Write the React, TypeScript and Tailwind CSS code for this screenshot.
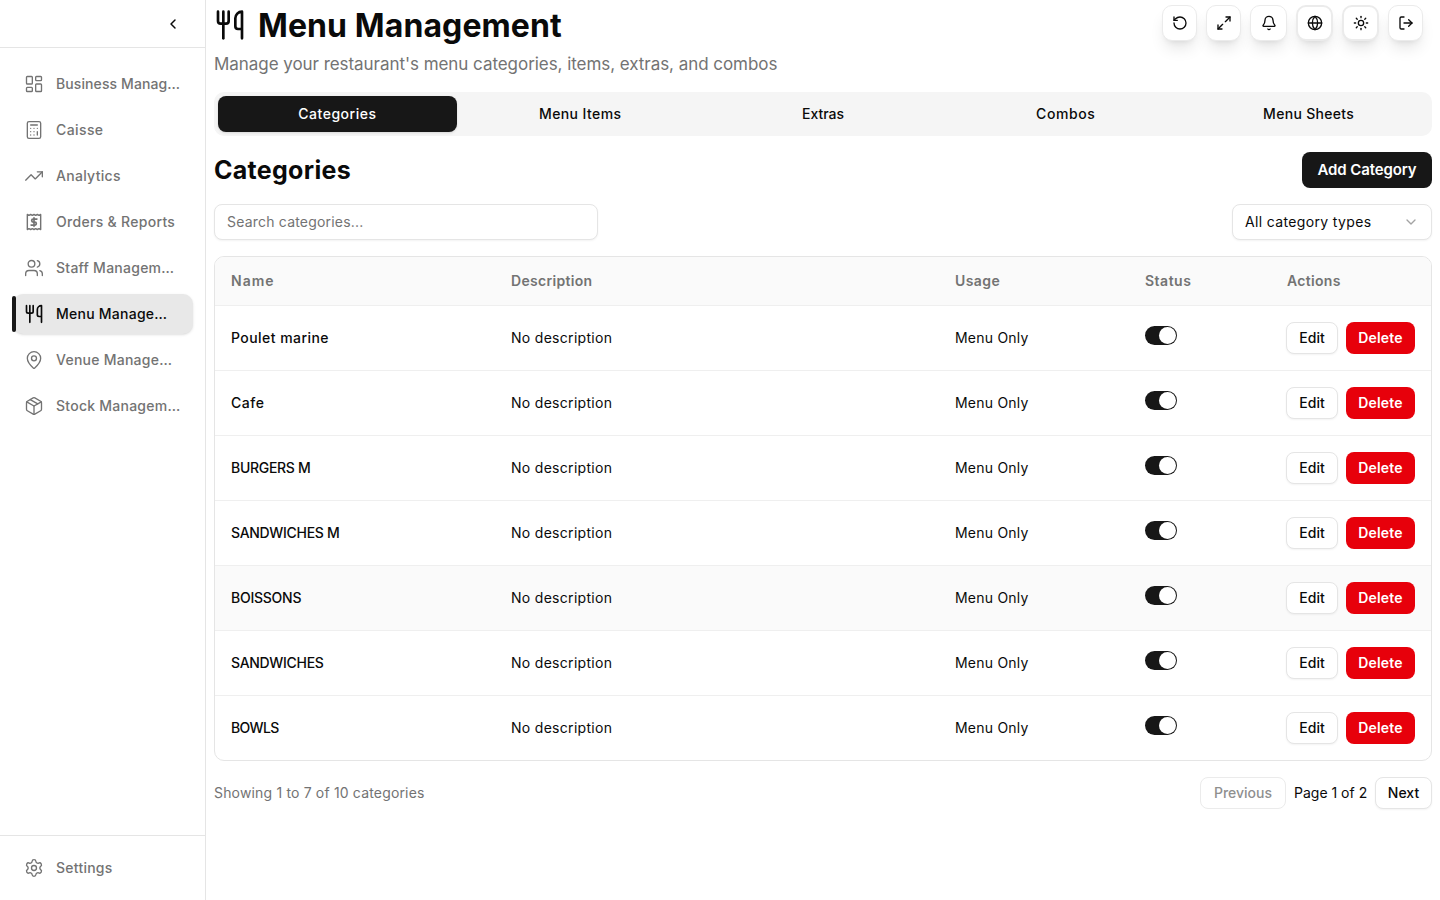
import React from "react";
import { ChevronLeft, ChevronDown, LayoutDashboard, Calculator, TrendingUp, Users, Utensils, MapPin, Package, Settings, RotateCcw, Maximize2, Bell, Globe, Sun, LogOut } from "lucide-react";

const OrdersIcon = ({ className }: { className?: string }) => (
  <svg viewBox="0 0 24 24" width="20" height="20" fill="none" stroke="currentColor" strokeWidth="1.7" strokeLinecap="round" strokeLinejoin="round" className={className}>
    <path d="M4 3l2 1 2-1 2 1 2-1 2 1 2-1 2 1 2-1v18l-2-1-2 1-2-1-2 1-2-1-2 1-2-1-2 1Z" />
    <path d="M15.5 8.5h-4.5a1.8 1.8 0 0 0 0 3.6h2a1.8 1.8 0 0 1 0 3.6H8.5" strokeWidth="2" />
    <path d="M12 7v10.2" strokeWidth="2" />
  </svg>
);

const nav = [
  { label: "Business Manag…", icon: LayoutDashboard, t: "tracking-[0.1px]" },
  { label: "Caisse", icon: Calculator, t: "tracking-[0.4px]" },
  { label: "Analytics", icon: TrendingUp, t: "tracking-[0.3px]" },
  { label: "Orders & Reports", icon: OrdersIcon, t: "tracking-[0.3px]" },
  { label: "Staff Managem…", icon: Users, t: "tracking-[0.25px]" },
  { label: "Menu Manage…", icon: Utensils, active: true, t: "tracking-[0.25px]" },
  { label: "Venue Manage…", icon: MapPin, t: "tracking-[0.25px]" },
  { label: "Stock Managem…", icon: Package, t: "tracking-[0.25px]" },
];

const rows = [
  { name: "Poulet marine", t: "tracking-[0.45px]" },
  { name: "Cafe", t: "tracking-[0.5px]" },
  { name: "BURGERS M", t: "tracking-[-0.3px]" },
  { name: "SANDWICHES M", t: "tracking-[-0.3px]" },
  { name: "BOISSONS", t: "tracking-[-0.25px]" },
  { name: "SANDWICHES", t: "tracking-[-0.3px]" },
  { name: "BOWLS", t: "tracking-[-0.6px]" },
];

const tabs = [
  { name: "Categories", t: "tracking-[0.5px]" },
  { name: "Menu Items", t: "tracking-[0.4px]" },
  { name: "Extras", t: "tracking-[0px]" },
  { name: "Combos", t: "tracking-[0.6px]" },
  { name: "Menu Sheets", t: "tracking-[0.3px]" },
];

const heads = [
  { name: "Name", t: "px-[16px] tracking-[1px]" },
  { name: "Description", t: "px-[16px] tracking-[0.3px]" },
  { name: "Usage", t: "px-[16px] tracking-[0.4px]" },
  { name: "Status", t: "px-[16px] tracking-[0.5px]" },
  { name: "Actions", t: "pl-[17px] tracking-[0.3px]" },
];

const headerBtns = [
  { icon: RotateCcw, cls: "w-[35px]" },
  { icon: Maximize2, cls: "w-[35px]" },
  { icon: Bell, cls: "w-[37px]" },
  { icon: Globe, cls: "w-[37px] border-2" },
  { icon: Sun, cls: "w-[37px] border-2" },
  { icon: LogOut, cls: "w-[35px]" },
];

export default function App() {
  return (
    <div className="flex h-[900px] w-[1440px] overflow-hidden bg-white text-[14px] text-[#0a0a0a] font-['Inter','Liberation_Sans',sans-serif]">
      <aside className="flex h-full w-[206px] shrink-0 flex-col border-r border-[#e5e5e5] bg-white">
        <div className="flex h-[48px] shrink-0 items-center justify-end border-b border-[#e5e5e5] pr-[24px]">
          <ChevronLeft size={16} strokeWidth={2.2} />
        </div>
        <nav className="flex flex-1 flex-col gap-[6px] pl-[12px] pr-[12px] pt-[16px]">
          {nav.map(({ label, icon: Icon, active, t }) => (
            <div key={label} className="relative flex h-[40px] items-center">
              {active && <span className="absolute left-0 top-[2px] h-[36px] w-[4px] rounded-full bg-[#171717]" />}
              <div className={`ml-[1px] flex h-[40px] w-[180px] items-center gap-[12px] rounded-[10px] pl-[11px] ${active ? "bg-[#e8e8e8] font-medium text-[#0a0a0a] shadow-sm" : "font-medium text-[#737373]"}`}>
                <Icon size={20} strokeWidth={active ? 2 : 1.6} className="shrink-0" />
                <span className={`whitespace-nowrap pb-[2px] ${t}`}>{label}</span>
              </div>
            </div>
          ))}
        </nav>
        <div className="flex h-[65px] shrink-0 items-center gap-[12px] border-t border-[#e5e5e5] pl-[24px] font-medium text-[#737373]">
          <Settings size={20} strokeWidth={1.6} />
          <span className="pb-[2px] tracking-[0.25px]">Settings</span>
        </div>
      </aside>

      <main className="flex min-w-0 flex-1 flex-col pl-[8px] pr-[8px]">
        <header className="flex h-[92px] shrink-0 items-start justify-between">
          <div>
            <div className="flex h-[50px] items-center gap-[12px]">
              <Utensils size={32} strokeWidth={2} className="shrink-0" />
              <h1 className="pt-[2px] text-[32px] font-bold leading-none tracking-[0.1px]">Menu Management</h1>
            </div>
            <p className="mt-[1px] text-[17px] leading-[26px] tracking-[-0.05px] text-[#737373]">Manage your restaurant's menu categories, items, extras, and combos</p>
          </div>
          <div className="mt-[5px] flex gap-[9px] pr-[9px]">
            {headerBtns.map(({ icon: Icon, cls }, i) => (
              <button key={i} className={`flex h-[36px] items-center justify-center rounded-[10px] border border-[#ebebeb] bg-white shadow-lg ${cls}`}>
                <Icon size={16} strokeWidth={2} />
              </button>
            ))}
          </div>
        </header>

        <div className="grid h-[44px] shrink-0 grid-cols-5 gap-[4px] rounded-[10px] bg-[#f5f5f5] p-[4px]">
          {tabs.map(({ name, t }, i) => (
            <div key={name} className={`flex items-center justify-center rounded-[8px] pb-[2px] font-medium ${t} ${i === 0 ? "bg-[#171717] text-white shadow-sm" : ""}`}>{name}</div>
          ))}
        </div>

        <div className="mt-[16px] flex h-[36px] shrink-0 items-center justify-between">
          <h2 className="text-[25px] font-bold leading-none tracking-[0.3px]">Categories</h2>
          <button className="flex h-[36px] w-[130px] items-center justify-center rounded-[8px] bg-[#171717] pt-[1px] text-[15px] font-semibold tracking-[-0.1px] text-white">Add Category</button>
        </div>

        <div className="mt-[16px] flex h-[36px] shrink-0 items-center justify-between">
          <div className="flex h-[36px] w-[384px] items-center rounded-[8px] border border-[#e5e5e5] bg-white pb-[2px] pl-[12px] tracking-[0.2px] text-[#737373] shadow-xs">Search categories...</div>
          <div className="flex h-[36px] w-[200px] items-center justify-between rounded-[8px] border border-[#e5e5e5] bg-white pl-[12px] pr-[12px] shadow-xs">
            <span className="pb-[2px] tracking-[0.35px]">All category types</span>
            <ChevronDown size={16} className="text-[#a3a3a3]" />
          </div>
        </div>

        <div className="mt-[16px] shrink-0 overflow-hidden rounded-[10px] border border-[#e5e5e5]">
          <table className="w-full table-fixed border-collapse text-left">
            <colgroup>
              <col className="w-[280px]" />
              <col className="w-[444px]" />
              <col className="w-[190px]" />
              <col className="w-[141px]" />
              <col className="w-[161px]" />
            </colgroup>
            <thead>
              <tr className="h-[48px] bg-[#fafafa]">
                {heads.map(({ name, t }) => (
                  <th key={name} className={`font-semibold text-[#737373] ${t}`}>{name}</th>
                ))}
              </tr>
            </thead>
            <tbody>
              {rows.map(({ name, t }) => (
                <tr key={name} className={`h-[65px] border-t border-[#efefef] ${name === "BOISSONS" ? "bg-[#fafafa]" : ""}`}>
                  <td className={`px-[16px] font-medium ${t}`}>{name}</td>
                  <td className="px-[16px] tracking-[0.3px]">No description</td>
                  <td className="px-[16px] tracking-[0.22px]">Menu Only</td>
                  <td className="px-[16px]">
                    <div className="-mt-[4px] flex h-[19px] w-[32px] items-center justify-end rounded-full bg-[#171717] pr-[1px]">
                      <span className="h-[17px] w-[17px] rounded-full bg-white" />
                    </div>
                  </td>
                  <td className="pl-[16px]">
                    <div className="flex gap-[8px]">
                      <button className="flex h-[32px] w-[52px] items-center justify-center rounded-[8px] border border-[#e5e5e5] bg-white font-medium shadow-xs">Edit</button>
                      <button className="flex h-[32px] w-[69px] items-center justify-center rounded-[8px] bg-[#e7000b] font-semibold tracking-[0.2px] text-white">Delete</button>
                    </div>
                  </td>
                </tr>
              ))}
            </tbody>
          </table>
        </div>

        <div className="mt-[16px] flex h-[32px] shrink-0 items-center justify-between">
          <span className="pb-[2px] tracking-[0.17px] text-[#737373]">Showing 1 to 7 of 10 categories</span>
          <div className="flex items-center gap-[8px]">
            <button className="flex h-[32px] w-[86px] items-center justify-center rounded-[8px] border border-[#ebebeb] bg-white pb-[2px] font-medium text-[#8f8f8f]">Previous</button>
            <span className="w-[73px] whitespace-nowrap pb-[2px]">Page 1 of 2</span>
            <button className="flex h-[32px] w-[57px] items-center justify-center rounded-[8px] border border-[#e5e5e5] bg-white pb-[2px] font-medium shadow-xs">Next</button>
          </div>
        </div>
      </main>
    </div>
  );
}
